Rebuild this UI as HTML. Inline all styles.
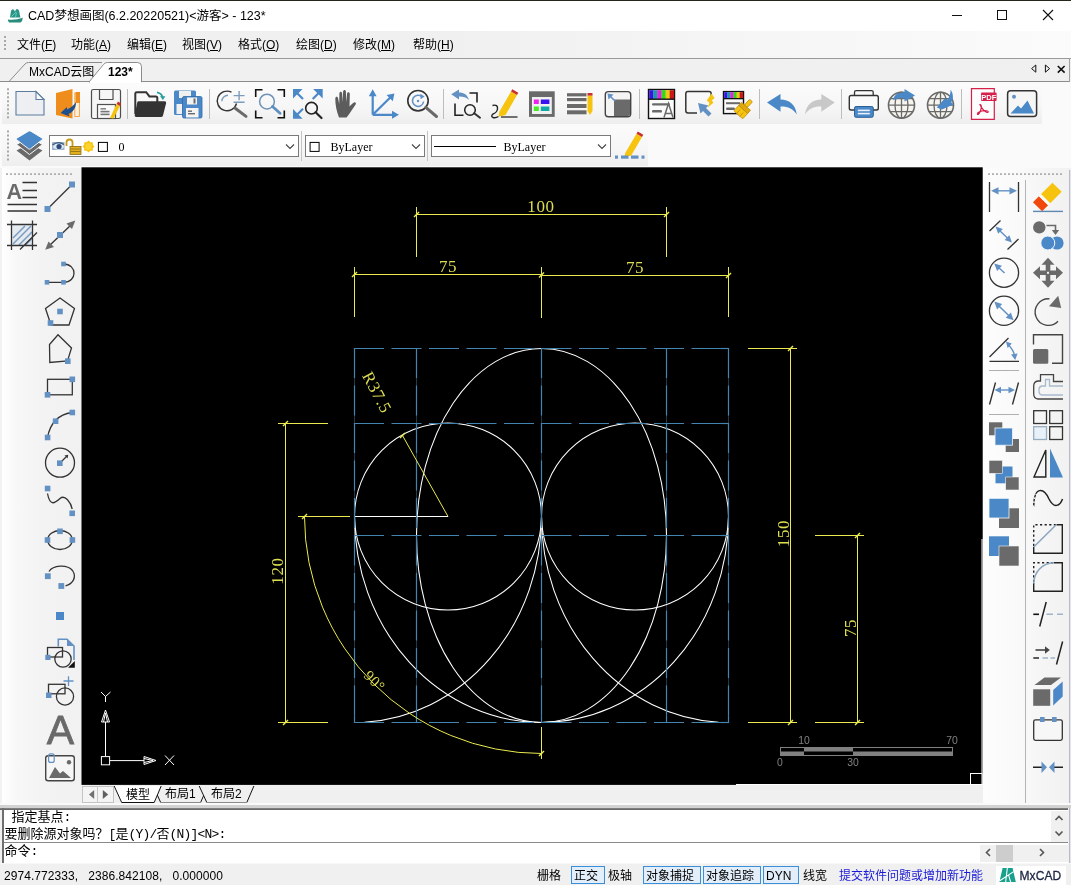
<!DOCTYPE html>
<html lang="zh-CN"><head><meta charset="utf-8"><title>CAD梦想画图(6.2.20220521) - 123*</title>
<style>
*{margin:0;padding:0;box-sizing:border-box}
html,body{width:1071px;height:885px;overflow:hidden;background:#f0f0f0}
body{font-family:"Liberation Sans","Noto Sans CJK SC",sans-serif;font-size:12px;color:#000;position:relative}
#app{position:absolute;left:0;top:0;width:1071px;height:885px;overflow:hidden;background:#f0f0f0}
.a{position:absolute}
.t{position:absolute;white-space:pre;line-height:1}
.ui{font-family:"Liberation Sans","Noto Sans CJK SC",sans-serif;font-size:12px}
.mono{font-family:"Liberation Mono","Noto Serif CJK SC",monospace}
.cj{font-family:"Liberation Sans","Noto Sans CJK SC",sans-serif;font-size:13px;letter-spacing:0}
.by{font-family:"Liberation Serif","Noto Serif CJK SC",serif;font-size:12px}
.cmd{font-family:"Liberation Mono","Noto Sans CJK SC",monospace;font-size:13px;letter-spacing:-0.8px}
svg{position:absolute;left:0;top:0;overflow:visible}
u{text-decoration:underline;text-underline-offset:1px}
</style></head>
<body><div id="app">
<div class="a" style="left:0;top:0;width:1071px;height:1px;background:#26261c"></div>
<div class="a" style="left:0;top:1px;width:1071px;height:30px;background:#fff"></div>
<div class="a" style="left:0;top:30.8px;width:1071px;height:27.2px;background:linear-gradient(90deg,#f0f0f0 0,#f0f0f0 42%,#fbfbfb 100%)"></div>
<div class="a" style="left:0;top:58px;width:1071px;height:24px;background:#f0f0f0;border-top:1px solid #9a9a9a"></div>
<div class="a" style="left:0;top:81px;width:1070px;height:1px;background:#8c8c8c"></div>
<div class="a" style="left:1069px;top:58px;width:1px;height:24px;background:#a0a0a0"></div>
<div class="a" style="left:0;top:82px;width:1071px;height:86px;background:#fafafa"></div>
<div class="a" style="left:2px;top:84px;width:1040px;height:40px;background:linear-gradient(#fbfbfb,#f6f6f6 60%,#eeeeee)"></div>
<div class="a" style="left:2px;top:126px;width:646px;height:40px;background:linear-gradient(#fbfbfb,#f6f6f6 60%,#eeeeee)"></div>
<div class="a" style="left:0;top:168px;width:82px;height:636px;background:linear-gradient(90deg,#f2f2f2 0,#f2f2f2 1.5px,#ffffff 2.5px,#fdfdfd 5px,#f8f8f8 16px,#f3f3f3 42px,#f1f1f1 100%)"></div>
<div class="a" style="left:983px;top:168px;width:88px;height:636px;background:linear-gradient(90deg,#fdfdfd 0,#f4f4f4 100%)"></div>
<div class="a" style="left:1026px;top:168px;width:45px;height:636px;background:linear-gradient(90deg,#f8f8f8 0,#f1f1f1 100%)"></div>
<div class="a" style="left:1025px;top:180px;width:1px;height:624px;background:#b4b4b4"></div>
<div class="a" style="left:1069px;top:170px;width:1px;height:715px;background:#b9bcc8"></div><div class="a" style="left:1070px;top:170px;width:1px;height:715px;background:#e4e5ea"></div>
<svg width="1071" height="885" viewBox="0 0 1071 885"><rect x="81.5" y="167.3" width="901.2" height="617.6" fill="#000"/></svg>
<div class="a" style="left:82px;top:785px;width:901px;height:19px;background:#f0f0f0"></div>
<div class="a" style="left:81.5px;top:786px;width:32.5px;height:17px;background:#f4f4f4;border:1px solid #c4c4c4"></div>
<div class="a" style="left:97px;top:786px;width:1px;height:17px;background:#c8c8c8"></div>
<div class="a" style="left:0;top:803px;width:1071px;height:2px;background:#fafafa"></div>
<div class="a" style="left:0;top:805px;width:1071px;height:3px;background:#d2d2d2"></div>
<div class="a" style="left:0;top:808px;width:1068px;height:2px;background:linear-gradient(#a0a0a0,#6a6a6a 40%,#6a6a6a)"></div>
<div class="a" style="left:2px;top:810px;width:1066px;height:53px;background:#fff"></div>
<div class="a" style="left:2px;top:808px;width:2px;height:55px;background:#6e6e6e"></div>
<div class="a" style="left:4px;top:842px;width:1064px;height:1px;background:#8a8a8a"></div>
<div class="a" style="left:1051px;top:811px;width:17px;height:31px;background:#f0f0f0"></div>
<div class="a" style="left:980px;top:845px;width:71px;height:17px;background:#f0f0f0"></div>
<div class="a" style="left:996px;top:845px;width:17px;height:17px;background:#cdcdcd"></div>
<div class="a" style="left:1051px;top:845px;width:17px;height:17px;background:#f0f0f0"></div>
<div class="a" style="left:0;top:863px;width:1071px;height:22px;background:#f0f0f0;border-top:1px solid #f8f8f8"></div>
<div class="a" style="left:571px;top:866px;width:34px;height:18px;background:#e2eefa;border:1px solid #3b8fd8"></div>
<div class="a" style="left:643px;top:866px;width:57.5px;height:18px;background:#e2eefa;border:1px solid #3b8fd8"></div>
<div class="a" style="left:703.4px;top:866px;width:57.4px;height:18px;background:#e2eefa;border:1px solid #3b8fd8"></div>
<div class="a" style="left:763.4px;top:866px;width:35.6px;height:18px;background:#e2eefa;border:1px solid #3b8fd8"></div>
<div class="a" style="left:996px;top:866px;width:70px;height:19px;background:#fff"></div>
<svg width="1071" height="885" viewBox="0 0 1071 885" fill="none" stroke-width="1" style="will-change:transform">
<line x1="354.5" y1="348.0" x2="354.5" y2="723.0" stroke="#1f3a4c" />
<line x1="416.5" y1="348.0" x2="416.5" y2="723.0" stroke="#1f3a4c" />
<line x1="541.5" y1="348.0" x2="541.5" y2="723.0" stroke="#1f3a4c" />
<line x1="666.5" y1="348.0" x2="666.5" y2="723.0" stroke="#1f3a4c" />
<line x1="728.5" y1="348.0" x2="728.5" y2="723.0" stroke="#1f3a4c" />
<circle cx="448.0" cy="516.5" r="93.5" stroke="#ffffff" stroke-width="1.05"/>
<circle cx="635.0" cy="516.5" r="93.5" stroke="#ffffff" stroke-width="1.05"/>
<ellipse cx="541.5" cy="535.5" rx="125.0" ry="187.0" stroke="#ffffff" stroke-width="1.05"/>
<path d="M354.5 516.5 A187.0 206.0 0 0 0 728.5 516.5" stroke="#ffffff" stroke-width="1.05"/>
<path d="M541.5 516.5 A187.0 206.0 0 0 1 364.5 722.2" stroke="#ffffff" stroke-width="1.05"/>
<path d="M541.5 516.5 A187.0 206.0 0 0 0 718.5 722.2" stroke="#ffffff" stroke-width="1.05"/>
<line x1="354.5" y1="516.5" x2="448.0" y2="516.5" stroke="#ffffff" />
<line x1="354.0" y1="348.5" x2="729.0" y2="348.5" stroke="#4484b0" stroke-dasharray="30 7.5" stroke-width="1.2"/>
<line x1="354.0" y1="423.5" x2="729.0" y2="423.5" stroke="#4484b0" stroke-dasharray="30 7.5" stroke-width="1.2"/>
<line x1="354.0" y1="535.5" x2="729.0" y2="535.5" stroke="#4484b0" stroke-dasharray="30 7.5" stroke-width="1.2"/>
<line x1="354.0" y1="722.5" x2="729.0" y2="722.5" stroke="#4484b0" stroke-dasharray="30 7.5" stroke-width="1.2"/>
<line x1="354.5" y1="348.0" x2="354.5" y2="723.0" stroke="#4484b0" stroke-dasharray="30 7.5" stroke-width="1.2"/>
<line x1="416.5" y1="348.0" x2="416.5" y2="723.0" stroke="#4484b0" stroke-dasharray="30 7.5" stroke-width="1.2"/>
<line x1="541.5" y1="348.0" x2="541.5" y2="723.0" stroke="#4484b0" stroke-dasharray="30 7.5" stroke-width="1.2"/>
<line x1="666.5" y1="348.0" x2="666.5" y2="723.0" stroke="#4484b0" stroke-dasharray="30 7.5" stroke-width="1.2"/>
<line x1="728.5" y1="348.0" x2="728.5" y2="723.0" stroke="#4484b0" stroke-dasharray="30 7.5" stroke-width="1.2"/>
<line x1="721.0" y1="348.5" x2="729.0" y2="348.5" stroke="#4484b0" stroke-width="1.2"/>
<line x1="721.0" y1="423.5" x2="729.0" y2="423.5" stroke="#4484b0" stroke-width="1.2"/>
<line x1="721.0" y1="535.5" x2="729.0" y2="535.5" stroke="#4484b0" stroke-width="1.2"/>
<line x1="721.0" y1="722.5" x2="729.0" y2="722.5" stroke="#4484b0" stroke-width="1.2"/>
<line x1="354.5" y1="715.5" x2="354.5" y2="723.0" stroke="#4484b0" stroke-width="1.2"/>
<line x1="416.5" y1="715.5" x2="416.5" y2="723.0" stroke="#4484b0" stroke-width="1.2"/>
<line x1="541.5" y1="715.5" x2="541.5" y2="723.0" stroke="#4484b0" stroke-width="1.2"/>
<line x1="666.5" y1="715.5" x2="666.5" y2="723.0" stroke="#4484b0" stroke-width="1.2"/>
<line x1="728.5" y1="715.5" x2="728.5" y2="723.0" stroke="#4484b0" stroke-width="1.2"/>
<line x1="416.5" y1="207" x2="416.5" y2="257" stroke="#eaea50" />
<line x1="666.5" y1="207" x2="666.5" y2="257" stroke="#eaea50" />
<line x1="416.5" y1="214.5" x2="666.5" y2="214.5" stroke="#eaea50" />
<line x1="414.0" y1="217.0" x2="419.0" y2="212.0" stroke="#eaea50" stroke-width="1.4"/>
<line x1="664.0" y1="217.0" x2="669.0" y2="212.0" stroke="#eaea50" stroke-width="1.4"/>
<text x="541" y="212" font-family="&quot;Liberation Serif&quot;,serif" font-size="17" fill="#dede52" text-anchor="middle" letter-spacing="0.6">100</text>
<line x1="354.5" y1="267" x2="354.5" y2="317" stroke="#eaea50" />
<line x1="541.5" y1="267" x2="541.5" y2="318" stroke="#eaea50" />
<line x1="728.5" y1="267" x2="728.5" y2="317" stroke="#eaea50" />
<line x1="354.5" y1="274.5" x2="541.5" y2="274.5" stroke="#eaea50" />
<line x1="541.5" y1="275.5" x2="728.5" y2="275.5" stroke="#eaea50" />
<line x1="352.0" y1="277.0" x2="357.0" y2="272.0" stroke="#eaea50" stroke-width="1.4"/>
<line x1="539.0" y1="277.5" x2="544.0" y2="272.5" stroke="#eaea50" stroke-width="1.4"/>
<line x1="726.0" y1="278.0" x2="731.0" y2="273.0" stroke="#eaea50" stroke-width="1.4"/>
<text x="448" y="272" font-family="&quot;Liberation Serif&quot;,serif" font-size="17" fill="#dede52" text-anchor="middle" letter-spacing="0.6">75</text>
<text x="635" y="273" font-family="&quot;Liberation Serif&quot;,serif" font-size="17" fill="#dede52" text-anchor="middle" letter-spacing="0.6">75</text>
<line x1="748" y1="348.5" x2="797" y2="348.5" stroke="#eaea50" />
<line x1="748" y1="722.5" x2="797" y2="722.5" stroke="#eaea50" />
<line x1="790.5" y1="348.5" x2="790.5" y2="722.5" stroke="#eaea50" />
<line x1="788.0" y1="351.0" x2="793.0" y2="346.0" stroke="#eaea50" stroke-width="1.4"/>
<line x1="788.0" y1="725.0" x2="793.0" y2="720.0" stroke="#eaea50" stroke-width="1.4"/>
<text x="788.6" y="533.5" font-family="&quot;Liberation Serif&quot;,serif" font-size="17" fill="#dede52" text-anchor="middle" transform="rotate(-90 788.6 533.5)" letter-spacing="0.6">150</text>
<line x1="815" y1="535.5" x2="864" y2="535.5" stroke="#eaea50" />
<line x1="815" y1="722.5" x2="864" y2="722.5" stroke="#eaea50" />
<line x1="857.5" y1="535.5" x2="857.5" y2="722.5" stroke="#eaea50" />
<line x1="855.0" y1="538.0" x2="860.0" y2="533.0" stroke="#eaea50" stroke-width="1.4"/>
<line x1="855.0" y1="725.0" x2="860.0" y2="720.0" stroke="#eaea50" stroke-width="1.4"/>
<text x="855.8" y="628" font-family="&quot;Liberation Serif&quot;,serif" font-size="17" fill="#dede52" text-anchor="middle" transform="rotate(-90 855.8 628)" letter-spacing="0.6">75</text>
<line x1="278" y1="423.5" x2="328" y2="423.5" stroke="#eaea50" />
<line x1="278" y1="722.5" x2="328" y2="722.5" stroke="#eaea50" />
<line x1="285.5" y1="423.5" x2="285.5" y2="722.5" stroke="#eaea50" />
<line x1="283.0" y1="426.0" x2="288.0" y2="421.0" stroke="#eaea50" stroke-width="1.4"/>
<line x1="283.0" y1="725.0" x2="288.0" y2="720.0" stroke="#eaea50" stroke-width="1.4"/>
<text x="283.4" y="571" font-family="&quot;Liberation Serif&quot;,serif" font-size="17" fill="#dede52" text-anchor="middle" transform="rotate(-90 283.4 571)" letter-spacing="0.6">120</text>
<line x1="402.5" y1="435.5" x2="448.0" y2="516.5" stroke="#eaea50" />
<line x1="400.0" y1="438.0" x2="405.0" y2="433.0" stroke="#eaea50" stroke-width="1.4"/>
<text x="372" y="395" font-family="&quot;Liberation Serif&quot;,serif" font-size="17" fill="#dede52" text-anchor="middle" transform="rotate(62 372 395)" letter-spacing="0.6">R37.5</text>
<line x1="298" y1="516.5" x2="350" y2="516.5" stroke="#eaea50" />
<line x1="541.5" y1="727" x2="541.5" y2="759" stroke="#eaea50" />
<path d="M304.5 516.5 A237 237 0 0 0 541.5 753.5" stroke="#eaea50"/>
<line x1="302.0" y1="519.0" x2="307.0" y2="514.0" stroke="#eaea50" stroke-width="1.4"/>
<line x1="539.0" y1="756.0" x2="544.0" y2="751.0" stroke="#eaea50" stroke-width="1.4"/>
<text x="371.1" y="684.5" font-family="&quot;Liberation Serif&quot;,serif" font-size="15" fill="#dede52" text-anchor="middle" transform="rotate(45 371.1 684.5)" letter-spacing="0.6">90°</text>
<rect x="101.4" y="756.6" width="8.2" height="8.2" stroke="#ffffff"/>
<line x1="105.5" y1="756" x2="105.5" y2="722" stroke="#ffffff" />
<path d="M105.5 710 L101.5 722 H109.5 Z M105.5 713 L103.5 722 M105.5 713 L107.5 722" stroke="#ffffff"/>
<line x1="110" y1="760.6" x2="144" y2="760.6" stroke="#ffffff" />
<path d="M156 760.5 L144 756.5 V764.5 Z M153 760.5 L144 758.5 M153 760.5 L144 762.5" stroke="#ffffff"/>
<path d="M101 692 L105.5 696.5 L110.5 692 M105.5 696.5 V702" stroke="#ffffff"/>
<path d="M165 755.5 L174 765 M174 755.5 L165 765" stroke="#ffffff"/>
<rect x="780.5" y="747.5" width="172" height="8" stroke="#808080"/>
<rect x="804" y="748" width="49" height="3.5" fill="#808080"/>
<rect x="781" y="751.5" width="23" height="4" fill="#808080"/>
<rect x="853" y="751.5" width="99" height="4" fill="#808080"/>
<text x="804" y="743.9" font-family="&quot;Liberation Sans&quot;,sans-serif" font-size="10.4" fill="#808080" text-anchor="middle">10</text>
<text x="952" y="743.9" font-family="&quot;Liberation Sans&quot;,sans-serif" font-size="10.4" fill="#808080" text-anchor="middle">70</text>
<text x="780" y="766.2" font-family="&quot;Liberation Sans&quot;,sans-serif" font-size="10.4" fill="#808080" text-anchor="middle">0</text>
<text x="853" y="766.2" font-family="&quot;Liberation Sans&quot;,sans-serif" font-size="10.4" fill="#808080" text-anchor="middle">30</text>
<line x1="736" y1="784.5" x2="983" y2="784.5" stroke="#ffffff" />
<line x1="982" y1="539" x2="982" y2="785" stroke="#ffffff" stroke-width="1"/>
<rect x="970.5" y="773.5" width="11.5" height="11" stroke="#ffffff" fill="#000"/>
</svg>
<svg width="1071" height="885" viewBox="0 0 1071 885">
<path d="M10 17.6 L11 11 Q12 8.6 13.6 9.6 L15 11.4 L16 9.4 Q17.8 8.2 19 10.6 L20.4 17.6 Z" fill="#2c9484"/><path d="M11.5 16.5 L16 12 M15.5 17 L16.5 12.5" stroke="#5fd0c0" stroke-width="1" fill="none"/><path d="M7.8 19.6 Q15 20.6 22.8 17.8 Q22.6 21.4 20.6 22.6 H9.2 Q8 21.6 7.8 19.6 Z" fill="#2a8c7c"/>
<rect x="952" y="15" width="10" height="1" fill="#111"/>
<rect x="997.5" y="10.5" width="9" height="9" fill="none" stroke="#111" stroke-width="1"/>
<path d="M1043 10 L1053 20 M1053 10 L1043 20" stroke="#111" stroke-width="1.1" fill="none"/>
<rect x="4" y="36" width="2" height="2" fill="#a8a8a8"/><rect x="4" y="40" width="2" height="2" fill="#a8a8a8"/><rect x="4" y="44" width="2" height="2" fill="#a8a8a8"/><rect x="4" y="48" width="2" height="2" fill="#a8a8a8"/>
<path d="M2 81.5 H9 L25 64 Q26.5 62.5 28.5 62.5 H102" fill="none" stroke="#8c8c8c" stroke-width="1"/>
<path d="M89 82 L103.5 64.5 Q105 62.5 107.5 62.5 H137.5 Q141.5 62.5 141.5 66.5 V82 Z" fill="#fff" stroke="#8c8c8c" stroke-width="1"/>
<rect x="90" y="81" width="51" height="2" fill="#fff"/>
<path d="M1035.8 65 L1031.6 68.6 L1035.8 72.2 Z" fill="none" stroke="#111" stroke-width="1"/>
<path d="M1045.4 65 L1049.6 68.6 L1045.4 72.2 Z" fill="none" stroke="#111" stroke-width="1"/>
<path d="M1057.8 66 L1064.6 72.6 M1064.6 66 L1057.8 72.6" stroke="#111" stroke-width="1.6" fill="none"/>
<path d="M94.2 790 L89 794.5 L94.2 799 Z" fill="#707070"/><path d="M102.8 790 L108.2 794.5 L102.8 799 Z" fill="#606060"/>
<path d="M114.2 786 L161.2 786 L154.2 802.5 L121.7 802.5 Z" fill="#ffffff"/>
<path d="M114.2 786 L121.7 802.5 H154.2 L161.2 786 M157.3 795 L160.7 802.5 M199.2 786 L206.8 802.5 M200.6 802.5 L203.6 795.6 M246.8 802.5 L253.9 786" fill="none" stroke="#111" stroke-width="1"/>
<path d="M160.7 802.5 H200.6 M206.8 802.5 H246.8" stroke="#8a8a8a" stroke-width="1" fill="none"/>
<path d="M1055.5 820 L1059 816.5 L1062.5 820" fill="none" stroke="#555" stroke-width="1.6"/><path d="M1055.5 831.5 L1059 835 L1062.5 831.5" fill="none" stroke="#555" stroke-width="1.6"/>
<path d="M990 849 L986.5 852.5 L990 856" fill="none" stroke="#555" stroke-width="1.6"/><path d="M1040 849 L1043.5 852.5 L1040 856" fill="none" stroke="#555" stroke-width="1.6"/>
<path d="M1002.6 868 H1012.6 L1015.8 882 H999.4 Z" fill="#17a08c"/><path d="M999.4 881 L1013.6 871.6 M1007.4 867.5 L1005.6 882.5 M1008.6 875.2 L1010.8 882.5" stroke="#ffffff" stroke-width="1.1" fill="none"/>
<rect x="7" y="88.3" width="2" height="2" fill="#a8a8a8"/><rect x="7" y="92.3" width="2" height="2" fill="#a8a8a8"/><rect x="7" y="96.3" width="2" height="2" fill="#a8a8a8"/><rect x="7" y="100.3" width="2" height="2" fill="#a8a8a8"/><rect x="7" y="104.3" width="2" height="2" fill="#a8a8a8"/><rect x="7" y="108.3" width="2" height="2" fill="#a8a8a8"/><rect x="7" y="112.3" width="2" height="2" fill="#a8a8a8"/><rect x="7" y="116.3" width="2" height="2" fill="#a8a8a8"/>
<path d="M16 91.5 H36 L44 99.5 V115 H16 Z" fill="#eeeff2" stroke="#5b7c9e" stroke-width="1.1"/><path d="M36 91.5 V99.5 H44 Z" fill="#fbfbfb" stroke="#5b7c9e" stroke-width="1.1"/>
<path d="M56 93 L72.5 89 V118.5 L56 115 Z" fill="#ef8d1c"/><rect x="74.8" y="93" width="4.6" height="23.5" fill="#fdf0dc" stroke="#f0a040" stroke-width="0.9"/><rect x="75.5" y="92" width="4.5" height="11" fill="#ef8d1c"/><path d="M60.5 113 L67 107 L67 109.5 C71 108 74 105 76 102 C76 108 73 112 68.5 114 L69.5 116.5 Z" fill="#1d4f8f"/>
<rect x="91.5" y="89.5" width="29" height="29" rx="1.8" fill="#f6f6f6" stroke="#4e4e4e" stroke-width="1.2"/><path d="M99.5 90 V99.5 H113 V90" fill="none" stroke="#4e4e4e" stroke-width="1.2"/><rect x="97.5" y="104.5" width="18" height="14" fill="#f9f9f9" stroke="#4e4e4e" stroke-width="1.2"/><rect x="100.5" y="108" width="5.5" height="1.6" fill="#888"/><rect x="100.5" y="110.8" width="9" height="1.6" fill="#777"/><rect x="100.5" y="113.6" width="9" height="1.6" fill="#777"/><path d="M110 118 L116.5 104 L120 106 L113.5 118.5 Z" fill="#f6c40f"/><path d="M116.5 104 L118 101.5 L121 103.5 L120 106 Z" fill="#c9302c"/>
<rect x="127" y="89" width="1" height="30" fill="#bdbdbd"/>
<path d="M135.3 114 V93.6 Q135.3 92.2 136.8 92.2 H146.2 L149.4 96.4 H155.8 Q157.3 96.4 157.3 98 V102" fill="#f8f8f8" stroke="#333333" stroke-width="2"/><path d="M138.6 101.2 H164.6 Q166.6 101.2 166.1 103.2 L163 115.4 Q162.6 117 161 117 H136.2 Q134.3 117 134.7 115.3 L137.2 102.6 Q137.5 101.2 138.6 101.2 Z" fill="#333333"/><path d="M157 92.3 Q161.3 93 162.6 97" fill="none" stroke="#2a9d9d" stroke-width="1.8"/><path d="M160 96.3 H165.4 L162.9 100 Z" fill="#2a9d9d"/>
<rect x="174" y="90.5" width="22" height="24.5" rx="1.5" fill="#4a88c7"/><rect x="179" y="91" width="12" height="7" fill="#f0f0f0"/><rect x="176.5" y="104" width="6" height="10" fill="#f0f0f0"/><rect x="182.5" y="96.5" width="19.5" height="21.5" rx="1.5" fill="#4a88c7" stroke="#2f6aa8" stroke-width="0.8"/><rect x="187" y="97.5" width="10" height="7" fill="#f4f4f4"/><rect x="193.5" y="98.5" width="2" height="5" fill="#6a6a6a"/><rect x="186" y="108" width="12.5" height="9.5" fill="#f4f4f4"/><rect x="188" y="110.5" width="4" height="1.4" fill="#6a6a6a"/><rect x="188" y="113" width="7" height="1.4" fill="#6a6a6a"/>
<rect x="209" y="89" width="1" height="30" fill="#bdbdbd"/>
<path d="M236.5 103.5 A9.8 9.8 0 1 1 231.5 92.2" fill="none" stroke="#333333" stroke-width="1.4"/><line x1="235.2" y1="108.2" x2="246" y2="116.4" stroke="#6a6a6a" stroke-width="3" stroke-linecap="round"/>
<path d="M221.8 101.2 A6.3 6.3 0 0 1 228 95.3" fill="none" stroke="#7d9cbb" stroke-width="1.4"/><path d="M233.6 95.6 H244.6 M239.1 91 V100.2 M233.6 102.2 H244.6" stroke="#7d9cbb" stroke-width="1.4" fill="none"/>
<path d="M255.7 97 V89.7 H262.5 M277.5 89.7 H284.3 V97 M284.3 110.5 V117.8 H277.5 M262.5 117.8 H255.7 V110.5" fill="none" stroke="#111" stroke-width="1.6"/>
<circle cx="267" cy="101.6" r="7.4" fill="none" stroke="#6f93b8" stroke-width="1.5"/><line x1="272.5" y1="106.5" x2="280" y2="113.2" stroke="#5f8fc0" stroke-width="2.8" stroke-linecap="round"/>
<path d="M293 89 L302.6 89 L293 98.6 Z" fill="#4a88c7"/><line x1="296" y1="92" x2="303" y2="99" stroke="#4a88c7" stroke-width="2.2"/>
<path d="M322.7 89 L313.09999999999997 89 L322.7 98.6 Z" fill="#4a88c7"/><line x1="319.7" y1="92" x2="312.7" y2="99" stroke="#4a88c7" stroke-width="2.2"/>
<path d="M293 118.7 L302.6 118.7 L293 109.10000000000001 Z" fill="#4a88c7"/><line x1="296" y1="115.7" x2="303" y2="108.7" stroke="#4a88c7" stroke-width="2.2"/>
<circle cx="311.5" cy="108.2" r="5.8" fill="none" stroke="#222" stroke-width="1.6"/><line x1="315.6" y1="112.3" x2="321.5" y2="118" stroke="#222" stroke-width="2.2" stroke-linecap="round"/>
<path d="M339 117.6 C336.6 111 335.2 105 335.3 98.5 C335.4 96.3 337.9 96.3 338.1 98.5 L339.2 104 L339.4 93.3 C339.5 91.1 342 91.1 342.1 93.3 L342.7 102.3 L343.1 91.5 C343.2 89.4 345.8 89.4 345.9 91.5 L346.3 102.3 L347.1 93.6 C347.3 91.6 349.8 91.8 349.8 93.9 L349.5 106.6 C351 104.8 352.4 103 354 102.4 C355.6 101.9 356.4 103.2 355.6 104.4 C353 108 350.4 112.6 346.6 117.6 Z" fill="#5c5c5c"/>
<path d="M372.7 114.8 V93 M372.7 114.8 H394 M372.7 114.8 L390.5 97.2" fill="none" stroke="#4a88c7" stroke-width="2.2"/><path d="M372.7 89.2 L368.8 96.2 H376.6 Z M398.9 114.8 L392 110.8 V118.8 Z M394.4 93.6 L392.8 101.2 L386.6 95 Z" fill="#4a88c7"/>
<circle cx="418" cy="100.7" r="10.2" fill="none" stroke="#333333" stroke-width="1.6"/><line x1="425.8" y1="107.3" x2="436.5" y2="116.5" stroke="#6a6a6a" stroke-width="3" stroke-linecap="round"/>
<path d="M422 96.8 A5.6 5.6 0 1 0 423.6 101.5" fill="none" stroke="#6391c4" stroke-width="1.5"/><path d="M420.3 93.8 L424.6 96.6 L420.6 99.2 Z" fill="#6391c4"/><circle cx="418" cy="101" r="1.2" fill="#6391c4"/>
<rect x="443" y="89" width="1" height="30" fill="#bdbdbd"/>
<path d="M469.5 93 H477 V102.5 M455 103.5 V115.2 H463.5" fill="none" stroke="#222" stroke-width="1.6"/>
<circle cx="470" cy="110" r="5.3" fill="none" stroke="#222" stroke-width="1.5"/><line x1="474.2" y1="113.2" x2="480" y2="117.7" stroke="#333" stroke-width="2" stroke-linecap="round"/>
<path d="M451.2 94.3 L459 89.5 V92.6 C464 92.6 467.5 95 469 100 C466 97.2 463 96.5 459 96.6 V99.5 Z" fill="#6391c4"/>
<path d="M492.5 105.5 Q498 104 497.5 109 Q497 112.5 493 114 Q490.5 116 493 117.5 Q495.5 118.3 498.5 116.5" fill="none" stroke="#222" stroke-width="1.4"/><line x1="501" y1="117" x2="517.5" y2="117" stroke="#444" stroke-width="1.5"/><path d="M498.5 116.8 L499.5 111.5 L511 91.5 L517 95 L505.5 115 Z" fill="#f6c40f"/><path d="M511 91.5 L512.3 89.3 L518.3 92.8 L517 95 Z" fill="#c9302c"/>
<rect x="529" y="91.3" width="25.7" height="25.6" fill="#6a6a6a"/><rect x="532" y="97" width="19.8" height="17" fill="#f0f0f0"/><rect x="533.8" y="99.5" width="5" height="4.5" fill="#ee22ee"/><rect x="540.8" y="99.5" width="8.6" height="4.5" fill="#3a12f0"/><rect x="533.8" y="106.5" width="5" height="4.5" fill="#44ee22"/><rect x="540.8" y="106.5" width="8.6" height="4.5" fill="#12a8a8"/>
<rect x="567" y="93.2" width="19.5" height="3.2" fill="#6a6a6a"/>
<rect x="567" y="98" width="19.5" height="3.2" fill="#6a6a6a"/>
<rect x="567" y="104" width="19.5" height="4" fill="#6a6a6a"/>
<rect x="567" y="110.3" width="19.5" height="4" fill="#6a6a6a"/>
<path d="M587.5 95.5 H592.5 V111 L590 115 L587.5 111 Z" fill="#f6c40f"/><rect x="587.5" y="93" width="5" height="2.6" fill="#c9302c"/>
<rect x="605.3" y="91.6" width="25.4" height="25.2" rx="3" fill="#f4f4f4" stroke="#444" stroke-width="1.4"/><path d="M614 99.5 H630 V113.5 Q630 116 627.5 116 H614 Z" fill="#6a6a6a"/><path d="M607.5 93.5 L613.5 94.5 L608.5 99.5 Z" fill="#6391c4"/><line x1="610" y1="96" x2="615" y2="101" stroke="#6391c4" stroke-width="1.6"/>
<rect x="639" y="89" width="1" height="30" fill="#bdbdbd"/>
<rect x="648.5" y="89.5" width="26" height="29" fill="#fbfbfb" stroke="#111" stroke-width="1.4"/>
<rect x="649.20" y="90.2" width="4.40" height="8.8" fill="#3a10e8"/><rect x="653.30" y="90.2" width="4.40" height="8.8" fill="#1a9aa8"/><rect x="657.40" y="90.2" width="4.40" height="8.8" fill="#e820e0"/><rect x="661.50" y="90.2" width="4.40" height="8.8" fill="#30d820"/><rect x="665.60" y="90.2" width="4.40" height="8.8" fill="#f0c818"/><rect x="669.70" y="90.2" width="4.40" height="8.8" fill="#c81818"/>
<rect x="649" y="98.5" width="25" height="1.4" fill="#111"/>
<rect x="652" y="103.2" width="18" height="2.4" rx="1" fill="#6a6a6a"/><rect x="652" y="110" width="10" height="2.6" rx="1.2" fill="#6a6a6a"/><path d="M664 117.5 L668.5 103.5 L673 117.5 M665.5 113.5 H671.5" fill="none" stroke="#6a6a6a" stroke-width="1.5"/>
<path d="M697 113 H688 Q685.8 113 685.8 110.8 V93.8 Q685.8 91.6 688 91.6 H709 Q711.2 91.6 711.2 93.8 V96" fill="none" stroke="#333" stroke-width="1.5"/><path d="M698 103 L708.5 105.5 L706 108 L711.5 113.5 L708.5 116.5 L703 111 L700.5 113.5 Z" fill="#6391c4"/><path d="M711.6 93.6 L714.6 98.2 L711.8 100.2 L713.4 102.8 L707.8 107.4 L709.4 102.8 L706.8 100.4 Z" fill="#f6c40f"/>
<rect x="723.5" y="91.6" width="20" height="22" fill="#fbfbfb" stroke="#111" stroke-width="1.4"/>
<rect x="724.20" y="92.2" width="3.40" height="6" fill="#3a10e8"/><rect x="727.30" y="92.2" width="3.40" height="6" fill="#1a9aa8"/><rect x="730.40" y="92.2" width="3.40" height="6" fill="#e820e0"/><rect x="733.50" y="92.2" width="3.40" height="6" fill="#30d820"/><rect x="736.60" y="92.2" width="3.40" height="6" fill="#f0c818"/><rect x="739.70" y="92.2" width="3.40" height="6" fill="#c81818"/>
<rect x="724" y="98" width="19" height="1.3" fill="#111"/>
<rect x="726" y="102.2" width="14" height="2" fill="#6a6a6a"/><rect x="726" y="107.5" width="9" height="2.4" rx="1.2" fill="#6a6a6a"/>
<g transform="translate(744 108.5) rotate(42) scale(0.86) translate(-742 -106)"><rect x="739.6" y="93.5" width="4.6" height="9.5" rx="1.6" fill="#f6c40f" stroke="#b8860b" stroke-width="0.8"/><rect x="735" y="102.5" width="14" height="5" fill="#e0a80c" stroke="#b8860b" stroke-width="0.8"/><path d="M735 107.5 H749 V114.5 Q749 116 747.5 116 H736.5 Q735 116 735 114.5 Z" fill="#f6c40f" stroke="#b8860b" stroke-width="0.8"/><path d="M739.5 110 V116 M744.5 110 V116" stroke="#b8860b" stroke-width="0.8"/></g>
<rect x="759" y="89" width="1" height="30" fill="#bdbdbd"/>
<g transform="translate(767 94)" ><path d="M0 8.6 L13.5 0 V5.6 C22 5.6 28.5 10.5 29.8 20.5 C26 14.5 21 12.2 13.5 12.4 V17.8 Z" fill="#4a88c7"/></g>
<g transform="translate(834.8 94) scale(-1 1)"><path d="M0 8.6 L13.5 0 V5.6 C22 5.6 28.5 10.5 29.8 20.5 C26 14.5 21 12.2 13.5 12.4 V17.8 Z" fill="#c8c8c8"/></g>
<rect x="841" y="89" width="1" height="30" fill="#bdbdbd"/>
<path d="M854.5 95.5 V92.3 Q854.5 90.7 856.2 90.7 H871.5 Q873.2 90.7 873.2 92.3 V95.5" fill="#fafafa" stroke="#333" stroke-width="1.3"/><rect x="849.3" y="95.5" width="29" height="14.5" rx="1.8" fill="#fafafa" stroke="#333" stroke-width="1.4"/><rect x="854.5" y="106.5" width="18.8" height="10.8" rx="1.6" fill="#4a88c7" stroke="#2c5f96" stroke-width="1"/><rect x="857.8" y="109.6" width="12" height="1.6" fill="#e8f0fa"/><rect x="857.8" y="112.8" width="12" height="1.6" fill="#e8f0fa"/>
<circle cx="901.5" cy="105.2" r="13" fill="#f6f4ee" stroke="#6a6a6a" stroke-width="1.6"/><ellipse cx="901.5" cy="105.2" rx="6.5" ry="13" fill="none" stroke="#6a6a6a" stroke-width="1.3"/><path d="M901.5 92.2 V118.2 M888.5 105.2 H914.5 M890.32 98.7 H912.68 M890.32 111.7 H912.68" stroke="#6a6a6a" stroke-width="1.3" fill="none"/>
<path d="M893 100 C894 94.5 898 92.2 904.5 92.4 V89 L915 95.5 L904.5 101.5 V98.2 C900 98 896 98.6 893 100 Z" fill="#4a88c7"/>
<circle cx="940.5" cy="105.2" r="13" fill="#f6f4ee" stroke="#6a6a6a" stroke-width="1.6"/><ellipse cx="940.5" cy="105.2" rx="6.5" ry="13" fill="none" stroke="#6a6a6a" stroke-width="1.3"/><path d="M940.5 92.2 V118.2 M927.5 105.2 H953.5 M929.32 98.7 H951.68 M929.32 111.7 H951.68" stroke="#6a6a6a" stroke-width="1.3" fill="none"/>
<path d="M950.5 89.5 C953.5 94 953.8 98.5 951.2 102.6 L954 104.2 L942 109.5 L936.8 107.5 L944.6 98.5 L947 100 C949.6 97 950.8 93.6 950.5 89.5 Z" fill="#4a88c7"/>
<rect x="961" y="89" width="1" height="30" fill="#bdbdbd"/>
<path d="M971.5 88.6 H994.3 V119.4 H971.5 Z" fill="#fdfdfd" stroke="#d6204a" stroke-width="1.2"/><rect x="981" y="92.4" width="15.6" height="8.6" rx="1" fill="#d6204a"/><text x="988.8" y="99.8" font-family="&quot;Liberation Sans&quot;,sans-serif" font-weight="bold" font-size="7.6" fill="#fff" text-anchor="middle">PDF</text><path d="M980 104.5 C982 104.5 981.5 108.5 980.2 111.5 C979 114.2 977.6 115.2 977.4 114 C977.2 112.6 981 110.8 984 110.6 C987 110.4 988.8 111.4 988 112.2 C986.6 113.4 981.6 109.4 980 104.5 Z" fill="none" stroke="#d6204a" stroke-width="1.2"/>
<rect x="1007.6" y="90.8" width="29" height="25.6" rx="3" fill="#f6f6f6" stroke="#333" stroke-width="1.5"/><circle cx="1014" cy="96.7" r="2" fill="#6391c4"/><path d="M1010.5 113.5 L1018 105.5 L1021 108.5 L1027.5 100.5 L1034 113.5 Z" fill="#4a88c7"/>
<rect x="7" y="130.5" width="2" height="2" fill="#a8a8a8"/><rect x="7" y="134.5" width="2" height="2" fill="#a8a8a8"/><rect x="7" y="138.5" width="2" height="2" fill="#a8a8a8"/><rect x="7" y="142.5" width="2" height="2" fill="#a8a8a8"/><rect x="7" y="146.5" width="2" height="2" fill="#a8a8a8"/><rect x="7" y="150.5" width="2" height="2" fill="#a8a8a8"/><rect x="7" y="154.5" width="2" height="2" fill="#a8a8a8"/><rect x="7" y="158.5" width="2" height="2" fill="#a8a8a8"/>
<path d="M16.5 150.5 L29.5 143.5 L42.5 150.5 L29.5 160.5 Z" fill="#6a6a6a"/><path d="M16.5 144.5 L29.5 137 L42.5 144.5 L29.5 154.5 Z" fill="#6a6a6a" stroke="#fafafa" stroke-width="1"/><path d="M16.3 139.5 Q16 138.6 17 138 L28.5 131.2 Q29.6 130.6 30.8 131.2 L42 138 Q43 138.7 42.5 139.5 L30.5 148.8 Q29.5 149.5 28.5 148.8 Z" fill="#4a88c7" stroke="#fafafa" stroke-width="1"/>
<rect x="49.5" y="135.5" width="249" height="21" fill="#fff" stroke="#7a7a7a"/>
<rect x="305.5" y="135.5" width="119" height="21" fill="#fff" stroke="#7a7a7a"/>
<rect x="431.5" y="135.5" width="179" height="21" fill="#fff" stroke="#7a7a7a"/>
<rect x="301" y="131" width="1" height="30" fill="#c4c4c4"/><rect x="427" y="131" width="1" height="30" fill="#c4c4c4"/>
<rect x="52" y="142" width="12.5" height="8" fill="#9db3cc"/><ellipse cx="58.5" cy="146.5" rx="5.5" ry="3" fill="#dfe8f2"/><circle cx="59" cy="146.5" r="2.6" fill="#2d4a78"/><path d="M52.5 145 Q58 140.5 64 144.5" stroke="#3c5a80" stroke-width="1.2" fill="none"/>
<path d="M66.5 146 V142.5 Q66.5 139.5 69.5 139.5 Q72.5 139.5 72.5 142.5 V147" fill="none" stroke="#c59a1a" stroke-width="1.8"/><rect x="70" y="146.5" width="11" height="8" fill="#e0b020" stroke="#8a6a10" stroke-width="0.8"/><path d="M70.5 149 H80.5 M70.5 151.5 H80.5" stroke="#8a6a10" stroke-width="0.8"/>
<path d="M88.5 140.6 L90.3 142.2 L92.7 142.3 L92.8 144.7 L94.4 146.5 L92.8 148.3 L92.7 150.7 L90.3 150.8 L88.5 152.4 L86.7 150.8 L84.3 150.7 L84.2 148.3 L82.6 146.5 L84.2 144.7 L84.3 142.3 L86.7 142.2 Z" fill="#f7c20e"/><circle cx="88.5" cy="146.5" r="3.4" fill="#fbd42c"/>
<rect x="98.4" y="142.4" width="9" height="9" fill="#fff" stroke="#000" stroke-width="1"/>
<rect x="310.1" y="142.4" width="9" height="9" fill="#fff" stroke="#000" stroke-width="1"/>
<path d="M286 144.5 L290 148.5 L294 144.5" fill="none" stroke="#444" stroke-width="1.1"/>
<path d="M412 144.5 L416 148.5 L420 144.5" fill="none" stroke="#444" stroke-width="1.1"/>
<path d="M598 144.5 L602 148.5 L606 144.5" fill="none" stroke="#444" stroke-width="1.1"/>
<rect x="434" y="146" width="62" height="1" fill="#000"/>
<path d="M624.2 157 L625.5 152.5 L636.5 133.8 L642 137 L631 155.8 Z" fill="#f6c40f"/><path d="M636.5 133.8 L637.8 131.6 L643.3 134.8 L642 137 Z" fill="#c9302c"/><rect x="615" y="155.5" width="3" height="3.2" fill="#6391c4"/><rect x="621" y="155.5" width="7.5" height="3.2" fill="#6391c4"/><rect x="631" y="155.5" width="7.5" height="3.2" fill="#6391c4"/><rect x="641.5" y="155.5" width="3" height="3.2" fill="#6391c4"/>
<rect x="6" y="173.3" width="2" height="1.6" fill="#a8a8a8"/><rect x="10" y="173.3" width="2" height="1.6" fill="#a8a8a8"/><rect x="14" y="173.3" width="2" height="1.6" fill="#a8a8a8"/><rect x="18" y="173.3" width="2" height="1.6" fill="#a8a8a8"/><rect x="22" y="173.3" width="2" height="1.6" fill="#a8a8a8"/><rect x="26" y="173.3" width="2" height="1.6" fill="#a8a8a8"/><rect x="30" y="173.3" width="2" height="1.6" fill="#a8a8a8"/><rect x="34" y="173.3" width="2" height="1.6" fill="#a8a8a8"/><rect x="38" y="173.3" width="2" height="1.6" fill="#a8a8a8"/><rect x="42" y="173.3" width="2" height="1.6" fill="#a8a8a8"/><rect x="46" y="173.3" width="2" height="1.6" fill="#a8a8a8"/><rect x="50" y="173.3" width="2" height="1.6" fill="#a8a8a8"/><rect x="54" y="173.3" width="2" height="1.6" fill="#a8a8a8"/><rect x="58" y="173.3" width="2" height="1.6" fill="#a8a8a8"/><rect x="62" y="173.3" width="2" height="1.6" fill="#a8a8a8"/><rect x="66" y="173.3" width="2" height="1.6" fill="#a8a8a8"/><rect x="70" y="173.3" width="2" height="1.6" fill="#a8a8a8"/>
<text x="6.5" y="198.5" font-family="&quot;Liberation Sans&quot;,sans-serif" font-weight="bold" font-size="21.5" fill="#6a6a6a">A</text>
<path d="M22.5 182.5 H37 M22.5 190.5 H37 M22.5 197.5 H37 M7.5 204.5 H37 M7.5 211 H37" stroke="#333" stroke-width="1.3" fill="none"/>
<line x1="47.5" y1="209" x2="72" y2="184.5" stroke="#333" stroke-width="1.3"/><rect x="69.0" y="181.5" width="6" height="6" fill="#6391c4"/><rect x="44.5" y="206.0" width="6" height="6" fill="#6391c4"/>
<rect x="12" y="225" width="20.5" height="20.5" fill="#e4eaf0"/><path d="M13 238 L25 226 M13 244 L31 226 M19 245 L32 232 M25.5 245 L32 238.5" stroke="#7a9cc0" stroke-width="1.5" fill="none"/><path d="M11.5 220.5 V250 M32.5 220.5 V250 M7 224.5 H37 M7 245.5 H37 M20 249.5 L37 232.5" stroke="#333" stroke-width="1.3" fill="none"/>
<line x1="49" y1="246" x2="72" y2="224" stroke="#333" stroke-width="1.3"/><path d="M75.3 220.5 L72 229 L66.5 223.5 Z M45.2 249.8 L48.5 241.5 L54 247 Z" fill="#6a6a6a"/><rect x="57.0" y="232.0" width="6" height="6" fill="#6391c4"/>
<path d="M47.5 282.3 H63.5 C77.5 282.3 77.5 264 63.5 264" stroke="#333" stroke-width="1.3" fill="none"/><rect x="44.7" y="280.0" width="4.6" height="4.6" fill="#6391c4"/><rect x="61.2" y="280.0" width="4.6" height="4.6" fill="#6391c4"/><rect x="61.2" y="261.7" width="4.6" height="4.6" fill="#6391c4"/>
<path d="M60 298 L74.5 308.5 L69 325 H51 L45.5 308.5 Z" stroke="#333" stroke-width="1.3" fill="none"/><rect x="57.2" y="308.7" width="5.6" height="5.6" fill="#6391c4"/><rect x="47.7" y="320.2" width="5.6" height="5.6" fill="#6391c4"/>
<path d="M58 334.8 L71.5 348 L67.5 361 L49.8 362.5 L49.5 344.5 Z" stroke="#333" stroke-width="1.3" fill="none"/><rect x="65.0" y="358.4" width="5.6" height="5.6" fill="#6391c4"/>
<rect x="47.5" y="379.3" width="24.8" height="15.5" stroke="#333" stroke-width="1.3" fill="none"/><rect x="69.5" y="376.5" width="5.6" height="5.6" fill="#6391c4"/><rect x="44.7" y="392.0" width="5.6" height="5.6" fill="#6391c4"/>
<path d="M47.5 437.5 C50 424 58 414.5 72 412.5" stroke="#333" stroke-width="1.3" fill="none"/><rect x="69.5" y="409.7" width="5.6" height="5.6" fill="#6391c4"/><rect x="52.800000000000004" y="418.4" width="5.6" height="5.6" fill="#6391c4"/><rect x="44.800000000000004" y="434.7" width="5.6" height="5.6" fill="#6391c4"/>
<circle cx="60" cy="462.7" r="14.5" stroke="#333" stroke-width="1.3" fill="none"/><line x1="60" y1="463" x2="66" y2="457" stroke="#333" stroke-width="1.3"/><path d="M68.3 454.8 L67.5 458.6 L64.5 455.6 Z" fill="#333"/><rect x="57.0" y="460.4" width="5.6" height="5.6" fill="#6391c4"/>
<path d="M47.5 493.5 C50 507 55 503 60 498.5 C65 494 71 503 72.2 509" stroke="#333" stroke-width="1.3" fill="none"/><rect x="44.800000000000004" y="485.7" width="5.6" height="5.6" fill="#6391c4"/><rect x="69.4" y="510.49999999999994" width="5.6" height="5.6" fill="#6391c4"/>
<ellipse cx="60" cy="540" rx="12.3" ry="9.5" stroke="#333" stroke-width="1.3" fill="none"/><rect x="57.2" y="528.5" width="5.6" height="5.6" fill="#6391c4"/><rect x="44.7" y="537.2" width="5.6" height="5.6" fill="#6391c4"/><rect x="69.60000000000001" y="537.2" width="5.6" height="5.6" fill="#6391c4"/>
<path d="M49 571.5 C53 565 67 564 72.5 570.5 C77 577 73 584 65.5 585.8" stroke="#333" stroke-width="1.3" fill="none"/><rect x="44.9" y="573.3000000000001" width="5.8" height="5.8" fill="#6391c4"/><rect x="58.4" y="583.1" width="5.8" height="5.8" fill="#6391c4"/>
<rect x="56.0" y="612.0" width="8" height="8" fill="#4a88c7"/>
<path d="M58.3 646.5 V639.2 H67 L74 646 V660" fill="none" stroke="#6391c4" stroke-width="1.6"/><path d="M67 639.2 V646 H74 Z" fill="#6391c4"/><rect x="47.5" y="647.5" width="15" height="9.5" stroke="#333" stroke-width="1.3" fill="none"/><circle cx="63" cy="659" r="8.2" stroke="#333" stroke-width="1.3" fill="none"/><path d="M45.3 654.8 H50.5 V660 H45.3 Z" fill="#6391c4"/><path d="M74.8 661 V667.8 H68 Z" fill="#111"/>
<rect x="48.5" y="684.3" width="16.5" height="9.5" stroke="#333" stroke-width="1.3" fill="none"/><circle cx="65" cy="696.5" r="8.6" stroke="#333" stroke-width="1.3" fill="none"/><path d="M46 692.5 H51.5 V698 H46 Z" fill="#6391c4"/><path d="M63.5 681 H73.5 M68.5 676.2 V686" stroke="#6391c4" stroke-width="1.3" fill="none"/>
<text x="60.5" y="743.8" font-family="&quot;Liberation Sans&quot;,sans-serif" font-size="41" fill="#6a6a6a" text-anchor="middle" stroke="#6a6a6a" stroke-width="0.8">A</text>
<rect x="45.7" y="755.8" width="28.6" height="25" rx="2.5" fill="#f6f6f6" stroke="#444" stroke-width="1.4"/><path d="M49 778 L55 767 L60 773.5 L63 771 L71 778 Z" fill="#6a6a6a"/><circle cx="69" cy="762.3" r="2.2" fill="#6a6a6a"/><rect x="48.6" y="753.8" width="5.6" height="8.6" rx="2" fill="none" stroke="#6391c4" stroke-width="1.2"/>
<rect x="988" y="173.3" width="2" height="1.6" fill="#a8a8a8"/><rect x="992" y="173.3" width="2" height="1.6" fill="#a8a8a8"/><rect x="996" y="173.3" width="2" height="1.6" fill="#a8a8a8"/><rect x="1000" y="173.3" width="2" height="1.6" fill="#a8a8a8"/><rect x="1004" y="173.3" width="2" height="1.6" fill="#a8a8a8"/><rect x="1008" y="173.3" width="2" height="1.6" fill="#a8a8a8"/><rect x="1012" y="173.3" width="2" height="1.6" fill="#a8a8a8"/><rect x="1016" y="173.3" width="2" height="1.6" fill="#a8a8a8"/><rect x="1020" y="173.3" width="2" height="1.6" fill="#a8a8a8"/><rect x="1024" y="173.3" width="2" height="1.6" fill="#a8a8a8"/><rect x="1028" y="173.3" width="2" height="1.6" fill="#a8a8a8"/><rect x="1032" y="173.3" width="2" height="1.6" fill="#a8a8a8"/><rect x="1036" y="173.3" width="2" height="1.6" fill="#a8a8a8"/><rect x="1040" y="173.3" width="2" height="1.6" fill="#a8a8a8"/><rect x="1044" y="173.3" width="2" height="1.6" fill="#a8a8a8"/><rect x="1048" y="173.3" width="2" height="1.6" fill="#a8a8a8"/><rect x="1052" y="173.3" width="2" height="1.6" fill="#a8a8a8"/><rect x="1056" y="173.3" width="2" height="1.6" fill="#a8a8a8"/><rect x="1060" y="173.3" width="2" height="1.6" fill="#a8a8a8"/>
<path d="M989.5 182 V212 M1018.5 182 V212" stroke="#333" stroke-width="1.3"/><line x1="997.5" y1="190.8" x2="1010.5" y2="190.8" stroke="#6391c4" stroke-width="1.4"/><path d="M991 190.8 L998.5 187.20000000000002 V194.4 Z M1017 190.8 L1009.5 187.20000000000002 V194.4 Z" fill="#6391c4"/>
<path d="M989.5 231 L1000.5 220.5 M1007.5 249.5 L1018.5 239" stroke="#333" stroke-width="1.3"/><g transform="translate(995.5 226.5) rotate(44.12)"><line x1="6" y1="0" x2="16.983689869122408" y2="0" stroke="#6391c4" stroke-width="1.4"/><path d="M22.983689869122408 0 L15.983689869122408 -3.4 V3.4 Z" fill="#6391c4"/><path d="M0 0 L7 -3.4 V3.4 Z" fill="#6391c4"/></g>
<circle cx="1004" cy="272.7" r="14.6" stroke="#333" stroke-width="1.3" fill="none"/><g transform="translate(1004.6 273) rotate(-137.89)"><line x1="0" y1="0" x2="7.818559127100014" y2="0" stroke="#6391c4" stroke-width="1.5"/><path d="M14.018559127100014 0 L6.818559127100014 -3.6 V3.6 Z" fill="#6391c4"/></g>
<circle cx="1004" cy="310.8" r="14.6" stroke="#333" stroke-width="1.3" fill="none"/><g transform="translate(994.3 301.6) rotate(43.94)"><line x1="6.4" y1="0" x2="20.40391762410863" y2="0" stroke="#6391c4" stroke-width="1.6"/><path d="M26.80391762410863 0 L19.40391762410863 -3.7 V3.7 Z" fill="#6391c4"/><path d="M0 0 L7.4 -3.7 V3.7 Z" fill="#6391c4"/></g>
<path d="M989.5 357 L1008.5 338 M989.5 361.3 H1019" stroke="#333" stroke-width="1.3" fill="none"/><path d="M1008.5 345 Q1013.5 350 1014.5 355.5" fill="none" stroke="#6391c4" stroke-width="1.4"/><path d="M1006 341.5 L1011.8 343.6 L1007.6 348 Z M1015.2 360 L1011 354.6 L1017.6 353.6 Z" fill="#6391c4"/>
<rect x="989" y="370" width="30" height="1" fill="#b0b0b0"/><rect x="989" y="414" width="30" height="1" fill="#b0b0b0"/>
<path d="M989.5 404.5 L995.5 382.5 M1012.5 404.5 L1018.5 382.5" stroke="#333" stroke-width="1.4"/><line x1="1000.0" y1="390" x2="1009.5" y2="390" stroke="#6391c4" stroke-width="1.4"/><path d="M994.5 390 L1001.0 386.8 V393.2 Z M1015 390 L1008.5 386.8 V393.2 Z" fill="#6391c4"/>
<rect x="989" y="422.3" width="13.3" height="13" fill="#6a6a6a"/><rect x="1005.7" y="439" width="13.3" height="13" fill="#6a6a6a"/><rect x="995" y="428" width="17.6" height="17.2" fill="#4a88c7" stroke="#f4f8fc" stroke-width="0.8"/>
<rect x="995.5" y="466.5" width="17" height="16.8" fill="#4a88c7"/><rect x="989" y="460.3" width="13.3" height="13" fill="#6a6a6a" stroke="#f4f4f4" stroke-width="0.6"/><rect x="1005.7" y="477" width="13.3" height="13" fill="#6a6a6a" stroke="#f4f4f4" stroke-width="0.6"/>
<rect x="999" y="508.3" width="20" height="19.7" fill="#6a6a6a"/><rect x="989" y="498.3" width="20" height="19.7" fill="#4a88c7" stroke="#f4f8fc" stroke-width="0.8"/>
<rect x="989" y="536.3" width="20" height="19.7" fill="#4a88c7"/><rect x="999" y="546" width="20" height="20" fill="#6a6a6a" stroke="#f4f4f4" stroke-width="0.6"/>
<g transform="rotate(-45 1047.3 197)"><rect x="1033.5" y="190.5" width="8.5" height="13" fill="#f2480c"/><rect x="1042" y="190.5" width="3" height="13" fill="#fdfdf6"/><rect x="1045" y="190.5" width="16.1" height="13" fill="#f6c40f"/></g><rect x="1033" y="210.7" width="30" height="1.4" fill="#5f88b2"/>
<circle cx="1039.3" cy="227.4" r="6.2" fill="#6a6a6a"/><path d="M1046.5 225.5 H1055.5 V231" fill="none" stroke="#6a6a6a" stroke-width="1.6"/><path d="M1051.8 230 H1059.2 L1055.5 235 Z" fill="#6a6a6a"/><circle cx="1057" cy="243" r="6.6" fill="#4a88c7"/><circle cx="1047.8" cy="243" r="7" fill="#4a88c7" stroke="#f2f6fa" stroke-width="1"/>
<path d="M1048 257.8 L1054.5 264.8 H1050.3 V270.5 H1056 V266.3 L1063 272.8 L1056 279.3 V275.1 H1050.3 V280.8 H1054.5 L1048 287.8 L1041.5 280.8 H1045.7 V275.1 H1040 V279.3 L1033 272.8 L1040 266.3 V270.5 H1045.7 V264.8 H1041.5 Z" fill="#6a6a6a"/><rect x="1047" y="271.8" width="2" height="2" fill="#f0f0f0"/>
<path d="M1058 321.3 A13.3 13.3 0 1 1 1049.5 298.8" fill="none" stroke="#444" stroke-width="1.3"/><path d="M1058.2 295.8 L1061.2 308 L1049 306.2 Z" fill="#6a6a6a"/>
<path d="M1033.5 344.5 V334.7 H1062.5 V363.3 H1052" fill="none" stroke="#444" stroke-width="1.4"/><rect x="1033" y="349" width="15.3" height="14.8" rx="1.5" fill="#6a6a6a"/>
<path d="M1063 381.5 H1053.5 V374.7 H1040.5 V381 H1038 Q1033.7 381.5 1033.7 386 V394 Q1033.7 398.5 1038 399 H1063" fill="none" stroke="#444" stroke-width="1.3"/><path d="M1063 386 H1049.5 V379.5 H1045.5 V386 H1042 Q1039 386.5 1039 389.5 V391.5 Q1039 394.5 1042 395 H1063" fill="none" stroke="#a9bbcc" stroke-width="1.3"/>
<rect x="1033.7" y="410.7" width="12.8" height="12.8" fill="none" stroke="#333" stroke-width="1.3"/><rect x="1049.7" y="410.7" width="12.8" height="12.8" fill="none" stroke="#333" stroke-width="1.3"/><rect x="1033.7" y="426.7" width="12.8" height="12.8" fill="#e8f0f8" stroke="#98acc0" stroke-width="1.3"/><rect x="1049.7" y="426.7" width="12.8" height="12.8" fill="none" stroke="#333" stroke-width="1.3"/>
<path d="M1045.8 450 V477 H1034 Z" fill="none" stroke="#222" stroke-width="1.4"/><path d="M1050 448.5 V477.5 H1063 Z" fill="#4a88c7"/>
<path d="M1033.7 507 C1034 485 1044 488 1049 499 C1054 509 1060 506 1062.5 499" fill="none" stroke="#222" stroke-width="1.5"/><path d="M1033.7 507 C1033.8 500 1035 496 1037 493.5" fill="none" stroke="#f4f4f4" stroke-width="1.7" stroke-dasharray="1.5 2.5"/>
<path d="M1033.7 547 V553.3 H1062.3 V524.7 H1056.5" fill="none" stroke="#222" stroke-width="1.4"/><path d="M1033.7 546 V524.7 H1056" fill="none" stroke="#222" stroke-width="1.4" stroke-dasharray="2.2 2.4"/><line x1="1033.7" y1="547" x2="1056.2" y2="524.7" stroke="#8aa4c0" stroke-width="1.5"/>
<path d="M1033.7 583 V591.3 H1062.3 V562.7 H1054" fill="none" stroke="#222" stroke-width="1.4"/><path d="M1033.7 582 V562.7 H1053" fill="none" stroke="#222" stroke-width="1.4" stroke-dasharray="2.2 2.4"/><path d="M1033.7 583.5 C1034 572 1042 563 1054 562.7" fill="none" stroke="#8aa4c0" stroke-width="1.5"/>
<path d="M1033.3 614.3 H1039" stroke="#111" stroke-width="1.6"/><path d="M1046.5 614.3 H1053 M1057 614.3 H1063" stroke="#9fb4ca" stroke-width="1.6"/><path d="M1039.7 626.5 L1046.2 602" stroke="#222" stroke-width="1.5"/>
<path d="M1035.5 650 H1046" stroke="#444" stroke-width="1.6"/><path d="M1045 646.3 L1049.8 650 L1045 653.7 Z" fill="#444"/><path d="M1033.3 658 H1039" stroke="#333" stroke-width="1.6"/><path d="M1042.5 658 H1048 M1050.5 658 H1055" stroke="#9fb4ca" stroke-width="1.6"/><path d="M1056.5 664.5 L1062.6 641.5" stroke="#222" stroke-width="1.5"/>
<path d="M1034.5 685 L1044.5 677.5 H1061 L1051 685 Z" fill="#6a6a6a"/><rect x="1033.2" y="689.3" width="17" height="16.5" fill="#6a6a6a"/><path d="M1053.2 690 L1062.7 681.5 V696.5 L1053.2 705.5 Z" fill="#4a88c7"/>
<rect x="1033.7" y="719.8" width="28.6" height="20.5" rx="1.8" fill="#f7f7f7" stroke="#333" stroke-width="1.3"/><rect x="1040" y="717" width="4.6" height="5" fill="#6391c4"/><rect x="1052" y="717" width="4.6" height="5" fill="#6391c4"/>
<path d="M1033 767.2 H1042 M1054 767.2 H1063" stroke="#222" stroke-width="1.4"/><path d="M1047 767.2 L1041.5 761.5 V773 Z M1049 767.2 L1054.5 761.5 V773 Z" fill="#6391c4"/>
</svg>
<div class="t ui" style="left:28px;top:10px;font-size:12.5px">CAD梦想画图(6.2.20220521)&lt;游客&gt; - 123*</div>
<div class="t ui" style="left:17px;top:39px;">文件(<u>F</u>)</div>
<div class="t ui" style="left:71px;top:39px;">功能(<u>A</u>)</div>
<div class="t ui" style="left:127px;top:39px;">编辑(<u>E</u>)</div>
<div class="t ui" style="left:182px;top:39px;">视图(<u>V</u>)</div>
<div class="t ui" style="left:238px;top:39px;">格式(<u>O</u>)</div>
<div class="t ui" style="left:296px;top:39px;">绘图(<u>D</u>)</div>
<div class="t ui" style="left:353px;top:39px;">修改(<u>M</u>)</div>
<div class="t ui" style="left:413px;top:39px;">帮助(<u>H</u>)</div>
<div class="t ui" style="left:29px;top:66px;">MxCAD云图</div>
<div class="t ui" style="left:108px;top:66px;font-weight:bold">123*</div>
<div class="t by" style="left:118.5px;top:141px;">0</div>
<div class="t by" style="left:330.5px;top:141px;">ByLayer</div>
<div class="t by" style="left:503.5px;top:141px;">ByLayer</div>
<div class="t ui" style="left:126px;top:788.5px;">模型</div>
<div class="t ui" style="left:165px;top:788px;">布局1</div>
<div class="t ui" style="left:211px;top:788px;">布局2</div>
<div class="t cmd" style="left:4.5px;top:810px;line-height:13px"> <span class="cj">指定基点</span>:</div>
<div class="t cmd" style="left:4.5px;top:827px;line-height:13px"><span class="cj">要删除源对象吗？</span>[<span class="cj">是</span>(Y)/<span class="cj">否</span>(N)]&lt;N&gt;:</div>
<div class="t cmd" style="left:4.5px;top:844px;line-height:13px"><span class="cj">命令</span>:</div>
<div class="t ui" style="left:4px;top:870px;font-size:12px;letter-spacing:0.055px">2974.772333,   2386.842108,   0.000000</div>
<div class="t ui" style="left:537px;top:870px;">栅格</div>
<div class="t ui" style="left:574px;top:870px;">正交</div>
<div class="t ui" style="left:608px;top:870px;">极轴</div>
<div class="t ui" style="left:646px;top:870px;">对象捕捉</div>
<div class="t ui" style="left:706px;top:870px;">对象追踪</div>
<div class="t ui" style="left:766px;top:870px;">DYN</div>
<div class="t ui" style="left:803px;top:870px;">线宽</div>
<div class="t ui" style="left:839px;top:870px;color:#1a1ad8">提交软件问题或增加新功能</div>
<div class="t ui" style="left:1019.5px;top:870px;font-size:12px;color:#1c2540;letter-spacing:0.1px;-webkit-text-stroke:0.3px #1c2540">MxCAD</div>
</div></body></html>
